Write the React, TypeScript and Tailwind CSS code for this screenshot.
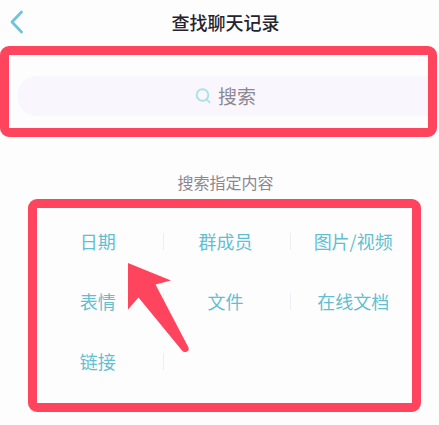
const categories = [
  '日期',
  '群成员',
  '图片/视频',
  '表情',
  '文件',
  '在线文档',
  '链接',
];

function Header() {
  return (
    <header className="relative flex h-[46px] items-center justify-center pl-[12px] pb-[2px]">
      <button type="button" aria-label="返回" className="absolute left-[9px] top-[10px]">
        <svg width="16" height="24" viewBox="0 0 16 24" fill="none" stroke="#6fc3dc" strokeWidth="2.8" strokeLinecap="round" strokeLinejoin="round">
          <path d="M12.500 2L3 12L12.500 22" />
        </svg>
      </button>
      <h1 className="text-[18px] leading-[24px] font-medium text-[#26242c]">查找聊天记录</h1>
    </header>
  );
}

function SearchBox() {
  return (
    <section className="mr-[2px] rounded-[9px] border-[9px] border-[#ff455e] pt-[21px] pb-[12px] pl-2">
      <label className="flex h-[40px] items-center justify-center gap-[7px] rounded-l-full bg-[#faf6fe] pl-2">
        <svg width="16" height="16" viewBox="0 0 16 16" fill="none" stroke="#a6e3e6" strokeWidth="1.900" strokeLinecap="round">
          <circle cx="7.500" cy="7" r="5.8" />
          <path d="M11.700 11.4L14.6 14.4" />
        </svg>
        <input
          type="text"
          aria-label="搜索"
          placeholder="搜索"
          className="w-10 bg-transparent text-[19px] leading-[28px] text-[#77737d] outline-none placeholder:text-[#8d8993] placeholder:opacity-100"
        />
      </label>
    </section>
  );
}

function Arrow() {
  return (
    <svg className="pointer-events-none absolute left-[89px] top-[53px]" width="66" height="94" viewBox="0 0 66 94" fill="#ff455e">
      <path d="M2 2L45 19.500L29.500 23.500L62.500 86.500Q63.500 90 60 91Q57.500 91.500 56 89.500L12.500 36.500L2 48.500Z" />
    </svg>
  );
}

function CategoryBox() {
  return (
    <section className="relative mr-[18px] ml-[28px] rounded-[9px] border-[9px] border-[#ff455e] pt-[3px] pb-[12px]">
      <div className="-mr-[6px] -ml-[2px] grid grid-cols-3">
        {categories.map((name, i) => (
          <div key={name} className="flex h-[60px] items-center">
            <span className={`h-[17px] w-px ${i % 3 === 0 ? 'bg-transparent' : 'bg-[#f1ebf4]'}`} />
            <button type="button" className="flex-1 pr-[3px] text-[18px] leading-[26px] whitespace-nowrap text-[#63bfd0]">
              {name}
            </button>
          </div>
        ))}
        <div className="flex h-[60px] items-center">
          <span className="h-[17px] w-px bg-[#f1ebf4]" />
        </div>
      </div>
      <Arrow />
    </section>
  );
}

export default function App() {
  return (
    <main className="min-h-screen bg-[#fefdfe] font-['Noto_Sans_CJK_SC',sans-serif]">
      <Header />
      <SearchBox />
      <h2 className="pt-[33px] pb-[5px] pl-[12px] text-center text-[16px] leading-[24px] text-[#8b8790]">
        搜索指定内容
      </h2>
      <CategoryBox />
    </main>
  );
}
